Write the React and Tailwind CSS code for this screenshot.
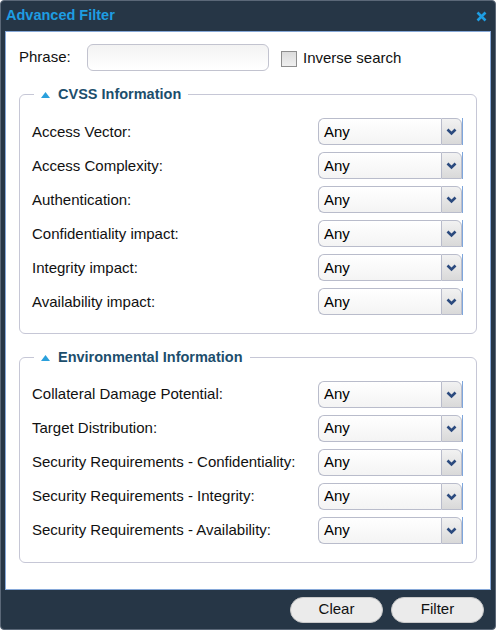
import React from 'react';

const cvssRows = [
  'Access Vector:',
  'Access Complexity:',
  'Authentication:',
  'Confidentiality impact:',
  'Integrity impact:',
  'Availability impact:',
];

const envRows = [
  'Collateral Damage Potential:',
  'Target Distribution:',
  'Security Requirements - Confidentiality:',
  'Security Requirements - Integrity:',
  'Security Requirements - Availability:',
];

const SelectBox = () => (
  <div className="flex h-[27px] w-[145px] items-stretch">
    <div className="flex flex-1 items-center rounded-l-[6px] border border-r-0 border-[#b9bccb] bg-gradient-to-b from-white to-[#f4f4f4] pl-[5px] text-[15px] text-black">
      Any
    </div>
    <div className="flex w-[21px] items-center justify-center rounded-tr-[6px] border border-[#b9bccb] bg-gradient-to-b from-[#f2f2f2] to-[#d9d9d9]">
      <svg width="11" height="8" viewBox="0 0 11 8">
        <path d="M1.5 1.5 L5.5 5.5 L9.5 1.5" fill="none" stroke="#2b4a7e" strokeWidth="2.6" />
      </svg>
    </div>
    <div className="w-[1px] bg-[#7ea6dc]" />
  </div>
);

const Section = ({ title, rows }) => (
  <fieldset className="rounded-[6px] border border-[#c6c7d6] pl-[12px] pr-[13px] pb-[14px] pt-[9px]">
    <legend className="ml-[2px] flex items-center px-[7px]">
      <svg width="9" height="6" viewBox="0 0 9 6" className="mr-[8px]">
        <path d="M0 6 L4.5 0 L9 6 Z" fill="#2aa0dc" />
      </svg>
      <span className="text-[14.5px] font-bold text-[#1c4e6c]">{title}</span>
    </legend>
    <div className="flex flex-col">
      {rows.map((r) => (
        <div key={r} className="flex h-[34px] items-center justify-between">
          <span className="text-[15px] text-[#111]">{r}</span>
          <SelectBox />
        </div>
      ))}
    </div>
  </fieldset>
);

export default function App() {
  return (
    <div
      className="flex h-[630px] w-[496px] flex-col rounded-[4px] border border-[#5b6878] bg-[#263646]"
      style={{ fontFamily: '"Liberation Sans", Arial, sans-serif' }}
    >
      {/* Title bar */}
      <div className="flex h-[30px] items-center justify-between pl-[5px] pr-[8px]">
        <span className="text-[14.5px] font-bold text-[#1e9de2]">Advanced Filter</span>
        <svg width="11" height="11" viewBox="0 0 11 11">
          <path d="M1.5 1.5 L9.5 9.5 M9.5 1.5 L1.5 9.5" stroke="#1e9de2" strokeWidth="2.6" />
        </svg>
      </div>

      {/* Body */}
      <div className="mx-[4px] flex h-[559px] flex-col border border-[#86a8d8] bg-white px-[13px] pt-[12px]">
        <div className="flex items-center">
          <span className="w-[68px] text-[15px] text-[#111]">Phrase:</span>
          <div className="h-[27px] w-[182px] rounded-[6px] border border-[#c2c3cf] bg-gradient-to-b from-[#f3f3f3] to-white" />
          <div className="ml-[12px] mt-[2px] h-[16px] w-[16px] border border-[#8e8e8e] bg-gradient-to-b from-[#dcdcdc] to-[#f0f0f0]" />
          <span className="ml-[6px] mt-[2px] text-[15px] text-[#111]">Inverse search</span>
        </div>

        <div className="mt-[13px]">
          <Section title="CVSS Information" rows={cvssRows} />
        </div>
        <div className="mt-[13px]">
          <Section title="Environmental Information" rows={envRows} />
        </div>
      </div>

      {/* Footer */}
      <div className="flex flex-1 items-center justify-end gap-[8px] pr-[11px]">
        <button className="h-[26px] w-[93px] rounded-full border border-[#c9c9c9] bg-[#ebebeb] text-[15px] text-[#111]">
          Clear
        </button>
        <button className="h-[26px] w-[93px] rounded-full border border-[#c9c9c9] bg-[#ebebeb] text-[15px] text-[#111]">
          Filter
        </button>
      </div>
    </div>
  );
}
